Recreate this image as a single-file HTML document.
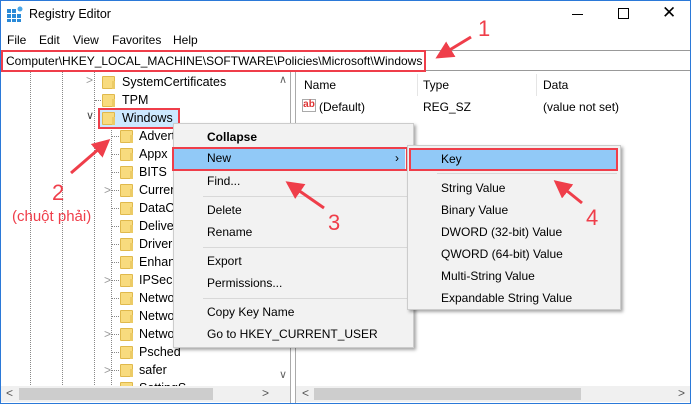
<!DOCTYPE html>
<html><head><meta charset="utf-8"><style>
*{margin:0;padding:0;box-sizing:border-box}
body{width:691px;height:404px;overflow:hidden;background:#fff;font-family:"Liberation Sans",sans-serif;font-size:12px;color:#000;position:relative}
.a{position:absolute;white-space:nowrap}
.fold{position:absolute;width:13px;height:13px;background:#f8db7e;border:1px solid #e0b94c;border-radius:1px}
.fold:after{content:"";position:absolute;right:-1px;top:4px;width:3px;height:8px;background:#eccb66}
.t{position:absolute;font-size:12.5px;white-space:nowrap}
.chev{position:absolute;color:#999;font-size:12px}
.dv{position:absolute;border-left:1px dotted #888;}
.dh{position:absolute;border-top:1px dotted #888;width:8px}
.red{color:#ef3e4a}
.mi{position:absolute;font-size:12px;white-space:nowrap}
.sep{position:absolute;height:1px;background:#d8d8d8}
</style></head><body>
<div class="a" style="left:0;top:0;width:691px;height:404px;border:1px solid #2b79d8;pointer-events:none;z-index:50"></div>
<!-- title -->
<svg class="a" style="left:7px;top:6px" width="16" height="16"><rect x="0" y="3" width="4" height="4" fill="#2a8ad8"/><rect x="5" y="3" width="4" height="4" fill="#2a8ad8"/><rect x="0" y="8" width="4" height="4" fill="#2a8ad8"/><rect x="5" y="8" width="4" height="4" fill="#2a8ad8"/><rect x="10" y="8" width="4" height="4" fill="#2a8ad8"/><rect x="0" y="13" width="4" height="3" fill="#2a8ad8"/><rect x="5" y="13" width="4" height="3" fill="#2a8ad8"/><rect x="10" y="13" width="4" height="3" fill="#2a8ad8"/><circle cx="13" cy="3" r="2.5" fill="#47a6e8"/></svg>
<div class="a" style="left:29px;top:7px;font-size:12.5px">Registry Editor</div>
<div class="a" style="left:572px;top:14px;width:11px;height:1px;background:#000"></div>
<div class="a" style="left:618px;top:8px;width:11px;height:11px;border:1px solid #000"></div>
<div class="a" style="left:662px;top:3px;font-size:17px">✕</div>
<!-- menu -->
<div class="a" style="left:7px;top:33px">File</div>
<div class="a" style="left:39px;top:33px">Edit</div>
<div class="a" style="left:73px;top:33px">View</div>
<div class="a" style="left:112px;top:33px">Favorites</div>
<div class="a" style="left:173px;top:33px">Help</div>
<!-- address -->
<div class="a" style="left:1px;top:50px;width:689px;height:21px;border-top:1px solid #999;border-bottom:1px solid #999"></div>
<div class="a" style="left:1px;top:50px;width:425px;height:22px;border:2px solid #ef3e4a"></div>
<div class="a" style="left:6px;top:54px;font-size:12px">Computer\HKEY_LOCAL_MACHINE\SOFTWARE\Policies\Microsoft\Windows</div>
<!-- tree lines -->
<div class="dv" style="left:30px;top:72px;height:315px"></div>
<div class="dv" style="left:62px;top:72px;height:315px"></div>
<div class="dv" style="left:94px;top:72px;height:315px"></div>
<div class="dv" style="left:111px;top:128px;height:259px"></div>
<div class="dh" style="left:95px;top:100px"></div>
<div class="chev" style="left:86px;top:73px">&gt;</div>
<div class="chev" style="left:86px;top:109px;color:#444;font-size:11px">∨</div>
<div class="fold" style="left:102px;top:76px"></div><div class="t" style="left:122px;top:75px">SystemCertificates</div>
<div class="fold" style="left:102px;top:94px"></div><div class="t" style="left:122px;top:93px">TPM</div>
<div class="a" style="left:100px;top:110px;width:78px;height:17px;background:#cce8ff"></div>
<div class="a" style="left:98px;top:108px;width:82px;height:21px;border:2px solid #ef3e4a"></div>
<div class="fold" style="left:102px;top:112px"></div><div class="t" style="left:122px;top:111px">Windows</div>
<div id="kids"></div>
<!-- tree v scroll -->
<div class="a" style="left:275px;top:72px;width:16px;height:315px;background:#fff"></div>
<div class="a" style="left:279px;top:73px;color:#666;font-size:11px">∧</div>
<div class="a" style="left:279px;top:368px;color:#666;font-size:11px">∨</div>
<div class="a" style="left:290px;top:72px;width:1px;height:332px;background:#aaa"></div>
<div class="a" style="left:295px;top:72px;width:1px;height:332px;background:#aaa"></div>
<!-- tree h scroll -->
<div class="a" style="left:1px;top:386px;width:289px;height:16px;background:#f0f0f0"></div>
<div class="a" style="left:19px;top:388px;width:194px;height:12px;background:#cdcdcd"></div>
<div class="a" style="left:6px;top:386px;color:#555">&lt;</div>
<div class="a" style="left:262px;top:386px;color:#555">&gt;</div>
<!-- right pane -->
<div class="a" style="left:304px;top:78px">Name</div>
<div class="a" style="left:417px;top:74px;width:1px;height:22px;background:#e5e5e5"></div>
<div class="a" style="left:423px;top:78px">Type</div>
<div class="a" style="left:536px;top:74px;width:1px;height:22px;background:#e5e5e5"></div>
<div class="a" style="left:543px;top:78px">Data</div>
<div class="a" style="left:302px;top:99px;width:14px;height:13px;border:1px solid #aaa;color:#d33;font-size:10px;font-weight:bold;line-height:10px;text-align:center">ab</div>
<div class="a" style="left:319px;top:100px">(Default)</div>
<div class="a" style="left:423px;top:100px">REG_SZ</div>
<div class="a" style="left:543px;top:100px">(value not set)</div>
<div class="a" style="left:296px;top:386px;width:394px;height:16px;background:#f0f0f0"></div>
<div class="a" style="left:314px;top:388px;width:267px;height:12px;background:#cdcdcd"></div>
<div class="a" style="left:302px;top:386px;color:#555">&lt;</div>
<div class="a" style="left:678px;top:386px;color:#555">&gt;</div>
<!-- context menu -->
<div class="a" style="left:173px;top:123px;width:241px;height:225px;background:#f2f2f2;border:1px solid #ccc;box-shadow:2px 2px 3px rgba(0,0,0,.35)"></div>
<div class="mi" style="left:207px;top:130px;font-weight:bold">Collapse</div>
<div class="a" style="left:174px;top:148px;width:231px;height:21px;background:#91c9f7"></div>
<div class="a" style="left:172px;top:147px;width:236px;height:24px;border:2px solid #ef3e4a"></div>
<div class="mi" style="left:207px;top:151px">New</div>
<div class="mi" style="left:395px;top:151px">›</div>
<div class="mi" style="left:207px;top:174px">Find...</div>
<div class="sep" style="left:203px;top:196px;width:208px"></div>
<div class="mi" style="left:207px;top:203px">Delete</div>
<div class="mi" style="left:207px;top:225px">Rename</div>
<div class="sep" style="left:203px;top:247px;width:208px"></div>
<div class="mi" style="left:207px;top:254px">Export</div>
<div class="mi" style="left:207px;top:276px">Permissions...</div>
<div class="sep" style="left:203px;top:298px;width:208px"></div>
<div class="mi" style="left:207px;top:305px">Copy Key Name</div>
<div class="mi" style="left:207px;top:327px">Go to HKEY_CURRENT_USER</div>
<!-- submenu -->
<div class="a" style="left:407px;top:145px;width:214px;height:165px;background:#f2f2f2;border:1px solid #ccc;box-shadow:2px 2px 3px rgba(0,0,0,.35)"></div>
<div class="a" style="left:410px;top:149px;width:206px;height:21px;background:#91c9f7"></div>
<div class="a" style="left:409px;top:148px;width:209px;height:23px;border:2px solid #ef3e4a"></div>
<div class="mi" style="left:441px;top:152px">Key</div>
<div class="sep" style="left:437px;top:173px;width:180px"></div>
<div class="mi" style="left:441px;top:181px">String Value</div>
<div class="mi" style="left:441px;top:203px">Binary Value</div>
<div class="mi" style="left:441px;top:225px">DWORD (32-bit) Value</div>
<div class="mi" style="left:441px;top:247px">QWORD (64-bit) Value</div>
<div class="mi" style="left:441px;top:269px">Multi-String Value</div>
<div class="mi" style="left:441px;top:291px">Expandable String Value</div>
<!-- annotations -->
<svg class="a" style="left:0;top:0;z-index:40" width="691" height="404">
<defs><marker id="m" markerWidth="6" markerHeight="6" refX="5" refY="3" orient="auto"><path d="M0,0 L6,3 L0,6 z" fill="#ef3e4a"/></marker></defs>
<g stroke="#ef3e4a" stroke-width="3" marker-end="url(#m)">
<line x1="471" y1="37" x2="438" y2="57"/>
<line x1="71" y1="173" x2="108" y2="141"/>
<line x1="324" y1="208" x2="288" y2="183"/>
<line x1="582" y1="203" x2="556" y2="182"/>
</g>
<g fill="#ef3e4a" font-family="Liberation Sans" font-size="22"><text x="478" y="36">1</text><text x="52" y="200">2</text><text x="328" y="230">3</text><text x="586" y="225">4</text></g>
<text x="12" y="221" fill="#ef3e4a" font-family="Liberation Sans" font-size="15">(chuột phải)</text>
</svg>
<script>
var n=["Advert","Appx","BITS","Curren","DataCo","Deliver","DriverS","Enhan","IPSec","Netwo","Netwo","Netwo","Psched","safer","SettingS"],ch={3:1,8:1,11:1,13:1},h="";
n.forEach(function(s,i){var y=130+i*18;h+='<div class="dh" style="left:111px;top:'+(y+6)+'px"></div>'+(ch[i]?'<div class="chev" style="left:104px;top:'+(y-1)+'px">&gt;</div>':'')+'<div class="fold" style="left:120px;top:'+y+'px"></div><div class="t" style="left:139px;top:'+(y-1)+'px">'+s+'</div>';});
document.getElementById("kids").innerHTML=h;
</script>
</body></html>
